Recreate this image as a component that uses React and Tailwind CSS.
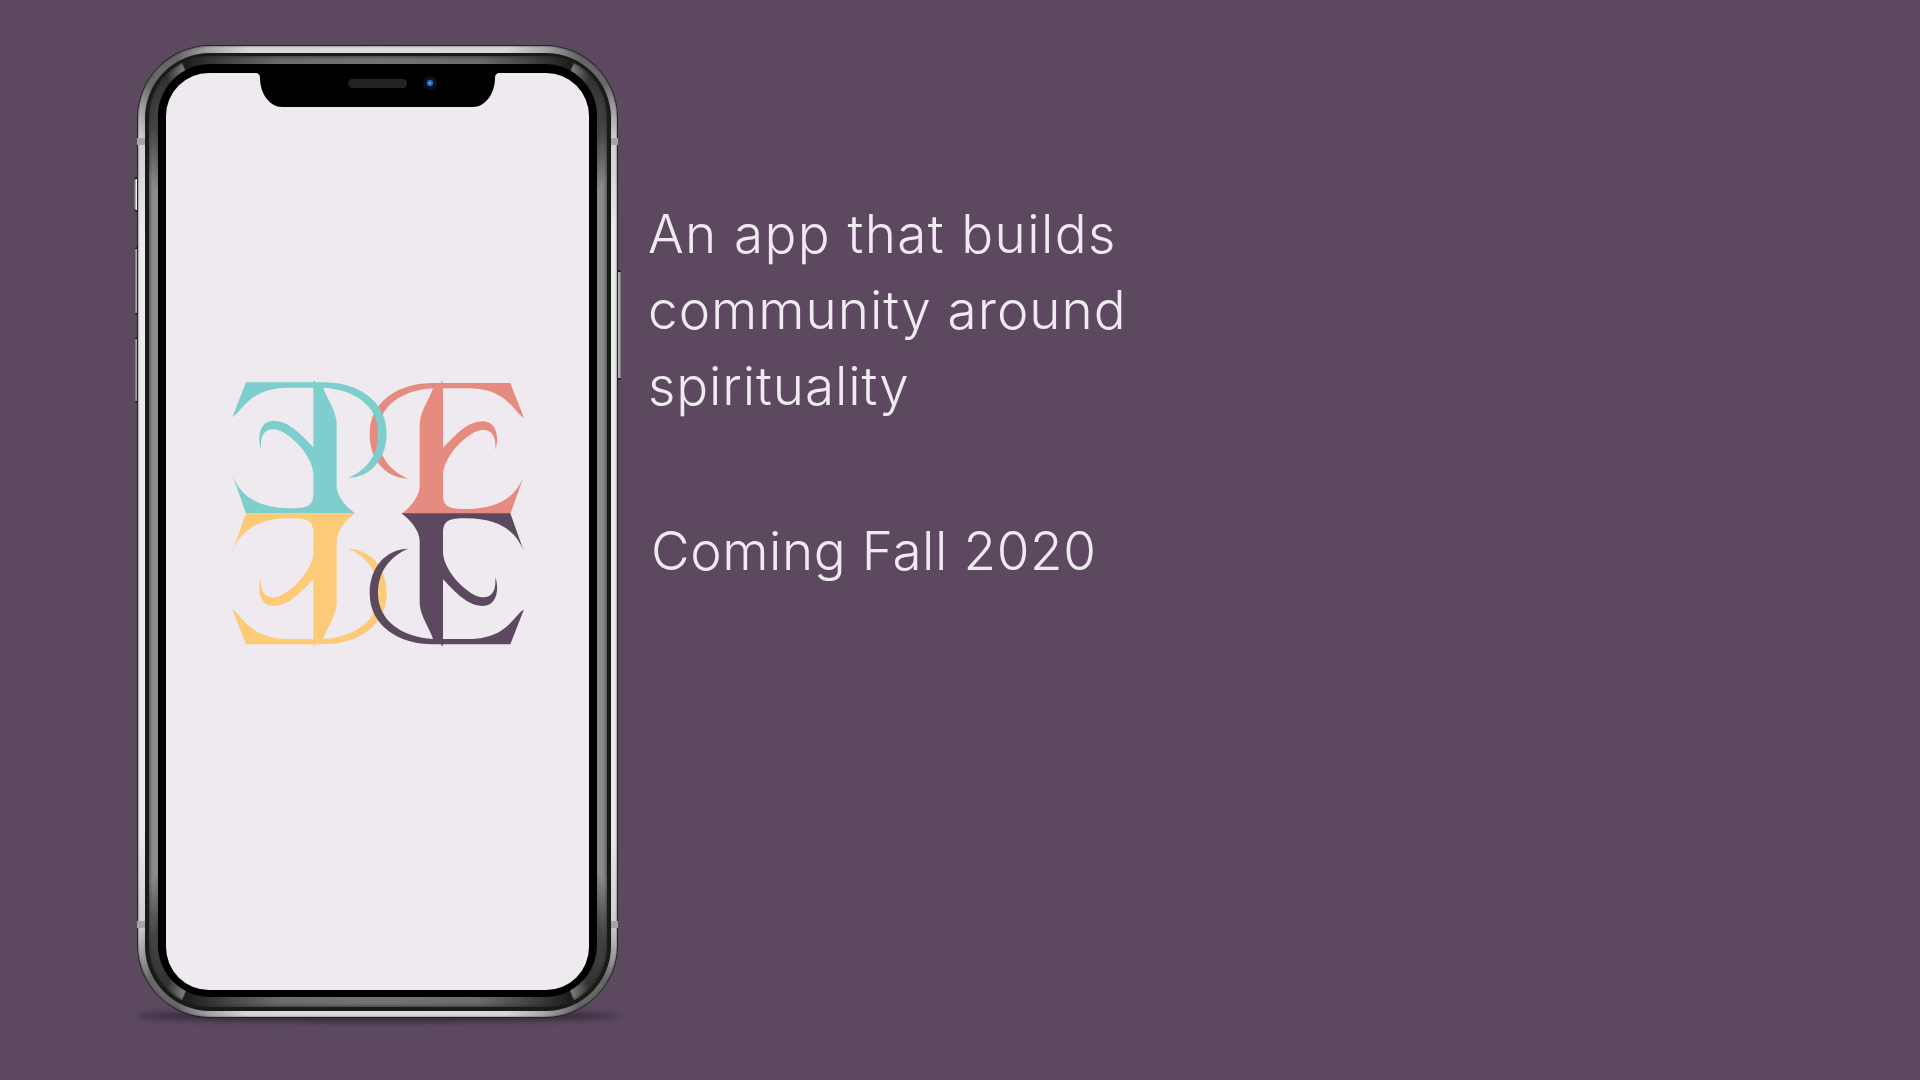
const GLYPH = "M108 67 L310 67 L312 60 L316 67 L340 67 C440 67 530 120 530 220 C530 300 480 352 415 354 C470 330 505 285 505 220 C505 135 430 88 340 83 C350 115 378 150 380 190 L380 380 C382 410 410 442 435 460 L108 460 L67 345 C90 405 140 445 240 445 C290 445 310 440 310 400 L310 340 C305 280 230 208 190 208 C165 207 150 225 153 268 C140 230 150 182 190 182 C235 182 270 220 310 262 L310 83 L230 83 C120 85 100 150 67 172 Z";

function Logo() {
  return (
    <svg width="340" height="300" viewBox="0 0 1020 900" className="block">
      <path d={GLYPH} fill="#e58b7f" transform="translate(1009 2) scale(-1 1)" />
      <path d={GLYPH} fill="#7ececd" />
      <path d={GLYPH} fill="#fdcb78" transform="translate(0 920) scale(1 -1)" />
      <path d={GLYPH} fill="#5c4960" transform="translate(1009 920) scale(-1 -1)" />
    </svg>
  );
}

function Notch() {
  return (
    <svg width="245" height="34" viewBox="0 0 245 34" className="absolute left-[89px] top-0">
      <path d="M0 0 L245 0 C241.500 0 240 2 240 5 C240 21 230 34 218 34 L27 34 C15 34 5 21 5 5 C5 2 3.500 0 0 0 Z" fill="#000" />
      <rect x="93" y="6" width="59" height="9" rx="4.500" fill="#232323" />
      <circle cx="175" cy="10" r="7" fill="#0b0f1c" />
      <circle cx="175" cy="10" r="3.200" fill="#2a62b5" />
      <circle cx="175" cy="10" r="1.200" fill="#6fa4e8" />
    </svg>
  );
}

function Phone() {
  return (
    <div className="relative w-[479px] h-[971px] shrink-0">
      <div className="absolute left-[-2px] right-[-2px] bottom-[-5px] h-[12px] rounded-[50%] bg-[#2c1f33] opacity-80 blur-[3px]" />
      <div className="absolute left-[-4px] top-[131px] w-[5px] h-[35px] rounded-l-[3px] bg-gradient-to-r from-[#555] via-[#eee] to-[#aaa] border-y-2 border-y-[#222]" />
      <div className="absolute left-[-3px] top-[201px] w-[4px] h-[68px] rounded-l-[2px] bg-gradient-to-r from-[#777] via-[#bbb] to-[#888] border-y-2 border-y-[#222]" />
      <div className="absolute left-[-3px] top-[291px] w-[4px] h-[66px] rounded-l-[2px] bg-gradient-to-r from-[#777] via-[#aaa] to-[#888] border-y-2 border-y-[#222]" />
      <div className="absolute right-[-4px] top-[224px] w-[5px] h-[110px] rounded-r-[2px] bg-gradient-to-r from-[#999] via-[#bbb] to-[#777] border-y-2 border-y-[#222]" />
      <div className="relative w-full h-full rounded-[72px] pt-[7px] pl-[7px] pr-[6px] pb-[6px] shadow-[0_0_0_1px_#26222a,inset_0_0_2px_#333] bg-[conic-gradient(#dcdcdc_0deg,#d8d8d8_15deg,#a8a8a8_19deg,#666_23deg,#6a6a6a_27deg,#cfcfcf_31deg,#ececec_38deg,#ececec_142deg,#cfcfcf_149deg,#6a6a6a_153deg,#666_157deg,#a8a8a8_161deg,#d8d8d8_165deg,#dcdcdc_180deg,#d8d8d8_195deg,#a8a8a8_199deg,#666_203deg,#6a6a6a_207deg,#cfcfcf_211deg,#ececec_218deg,#ececec_322deg,#cfcfcf_329deg,#6a6a6a_333deg,#666_337deg,#a8a8a8_341deg,#d8d8d8_345deg,#dcdcdc_360deg)]">
        <div className="h-full rounded-[65px] pt-[3px] pl-[4px] pr-[4px] pb-[4px] bg-[#1a1a1a]">
          <div className="h-full rounded-[61px] pt-[8px] pl-[9px] pr-[10px] pb-[10px] shadow-[inset_0_0_4px_#222] bg-[conic-gradient(#737373_0deg,#6c6c6c_12deg,#4a4a4a_17deg,#1c1c1c_22.600deg,#7c7c7c_22.800deg,#333_25deg,#444_29deg,#8c8c8c_33deg,#8c8c8c_147deg,#444_151deg,#333_155deg,#7c7c7c_157.200deg,#1c1c1c_157.400deg,#4a4a4a_163deg,#6c6c6c_168deg,#737373_180deg,#6c6c6c_192deg,#4a4a4a_197deg,#1c1c1c_202.600deg,#7c7c7c_202.800deg,#333_205deg,#444_209deg,#8c8c8c_213deg,#8c8c8c_327deg,#444_331deg,#333_335deg,#7c7c7c_337.200deg,#1c1c1c_337.400deg,#4a4a4a_343deg,#6c6c6c_348deg,#737373_360deg)]">
            <div className="h-full rounded-[52px] pt-[9px] pl-[8px] pr-[8px] pb-[7px] bg-black">
              <div className="relative h-full rounded-[43px] bg-[#efeaf0] overflow-hidden pt-[287px] pl-[44px]">
                <Notch />
                <Logo />
              </div>
            </div>
          </div>
        </div>
      </div>
      <div className="absolute left-[-1px] top-[92px] w-[8px] h-[7px] bg-[#a5a5a5]" />
      <div className="absolute right-[-1px] top-[92px] w-[7px] h-[7px] bg-[#a5a5a5]" />
      <div className="absolute left-[-1px] top-[875px] w-[8px] h-[7px] bg-[#a5a5a5]" />
      <div className="absolute right-[-1px] top-[875px] w-[7px] h-[7px] bg-[#a5a5a5]" />
    </div>
  );
}

export default function App() {
  return (
    <div className="w-full h-screen overflow-hidden bg-[#5c4960] flex items-start pl-[138px] pt-[46px] font-['Inter',sans-serif] font-light text-[#efeaf0]">
      <Phone />
      <div className="pl-[31px] pt-[150px] text-[53px] leading-[76px]">
        <div className="tracking-[1.4px]">An app that builds</div>
        <div className="tracking-[1px]">community around</div>
        <div className="tracking-[0.9px]">spirituality</div>
        <div className="mt-[89px] pl-[3px] tracking-[0.6px]">Coming Fall 2020</div>
      </div>
    </div>
  );
}
